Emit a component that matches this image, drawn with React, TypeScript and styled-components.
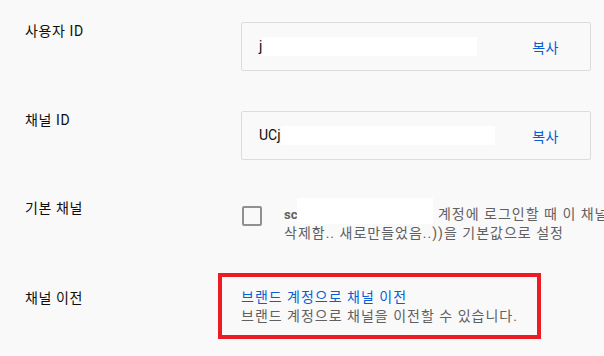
import styled, { createGlobalStyle } from "styled-components"

const GlobalStyle = createGlobalStyle`
  html, body {
    margin: 0;
    padding: 0;
    background: #f9f9f9;
    overflow: hidden;
  }
  body {
    font-family: Roboto, "Noto Sans CJK KR", sans-serif;
    -webkit-font-smoothing: antialiased;
  }
`

const Page = styled.div`
  width: 604px;
  height: 356px;
  box-sizing: border-box;
  padding: 22px 0 0 25px;
  background: #f9f9f9;
  display: flex;
  flex-direction: column;
`

const Row = styled.div<{ $gap: number }>`
  display: grid;
  grid-template-columns: 216px 1fr;
  margin-bottom: ${(p) => p.$gap}px;
`

const Label = styled.div`
  font-size: 14px;
  line-height: 18px;
  letter-spacing: 0.6px;
  color: #0d0d0d;
  white-space: nowrap;
`

const Field = styled.div`
  box-sizing: border-box;
  width: 350px;
  height: 49px;
  border: 1px solid #dcdcdc;
  border-radius: 2px;
  display: flex;
  align-items: center;
  padding: 0 31px 0 17px;
`

const FieldValue = styled.div`
  flex: 1;
  font-size: 14px;
  line-height: 19px;
  color: #0d0d0d;
  display: flex;
  align-items: center;
`

/* 가린 부분 */
const Redacted = styled.span<{ $w: number; $up?: number }>`
  display: inline-block;
  width: ${(p) => p.$w}px;
  height: 19px;
  background: #ffffff;
  vertical-align: -5px;
  box-shadow: 0 -${(p) => p.$up ?? 0}px 0 #ffffff;
`

const CopyButton = styled.button`
  border: none;
  background: none;
  padding: 0;
  font-family: inherit;
  font-size: 14px;
  letter-spacing: 0.5px;
  color: #065fd4;
  cursor: pointer;
`

const CheckRow = styled.div`
  display: flex;
  gap: 22px;
  padding-top: 6px;
  padding-left: 1px;
`

const CheckBox = styled.span`
  flex: none;
  box-sizing: border-box;
  width: 20px;
  height: 20px;
  margin-top: 1px;
  border: 2px solid #909090;
  border-radius: 2px;
`

const CheckText = styled.div`
  font-size: 14px;
  line-height: 19px;
  letter-spacing: 1px;
  color: #606060;
  white-space: nowrap;
`

const Account = styled.b`
  font-size: 13px;
  font-weight: 700;
  letter-spacing: 0;
  color: #606060;
`

const Migrate = styled.div`
  position: relative;
  font-size: 14px;
  line-height: 19px;
  letter-spacing: 1px;
  margin-top: -1px;

  &::after {
    content: "";
    position: absolute;
    left: -23px;
    top: -15px;
    width: 323px;
    height: 66px;
    box-sizing: border-box;
    border: 4px solid #ed1c24;
  }
`

const MigrateLink = styled.a`
  display: block;
  color: #065fd4;
  text-decoration: none;
`

const MigrateHint = styled.div`
  color: #606060;
`

const App = () => {
  return (
    <>
      <GlobalStyle />
      <Page>
        <Row $gap={40}>
          <Label>사용자 ID</Label>
          <Field>
            <FieldValue>
              j<Redacted $w={215} />
            </FieldValue>
            <CopyButton>복사</CopyButton>
          </Field>
        </Row>

        <Row $gap={39}>
          <Label>채널 ID</Label>
          <Field>
            <FieldValue>
              UCj<Redacted $w={214} />
            </FieldValue>
            <CopyButton>복사</CopyButton>
          </Field>
        </Row>

        <Row $gap={46}>
          <Label>기본 채널</Label>
          <CheckRow>
            <CheckBox />
            <CheckText>
              <Account>sc</Account>
              <Redacted $w={136} $up={7} /> 계정에 로그인할 때 이 채널(
              <br />
              삭제함.. 새로만들었음..))을 기본값으로 설정
            </CheckText>
          </CheckRow>
        </Row>

        <Row $gap={0}>
          <Label>채널 이전</Label>
          <Migrate>
            <MigrateLink href="#">브랜드 계정으로 채널 이전</MigrateLink>
            <MigrateHint>브랜드 계정으로 채널을 이전할 수 있습니다.</MigrateHint>
          </Migrate>
        </Row>
      </Page>
    </>
  )
}

export default App
